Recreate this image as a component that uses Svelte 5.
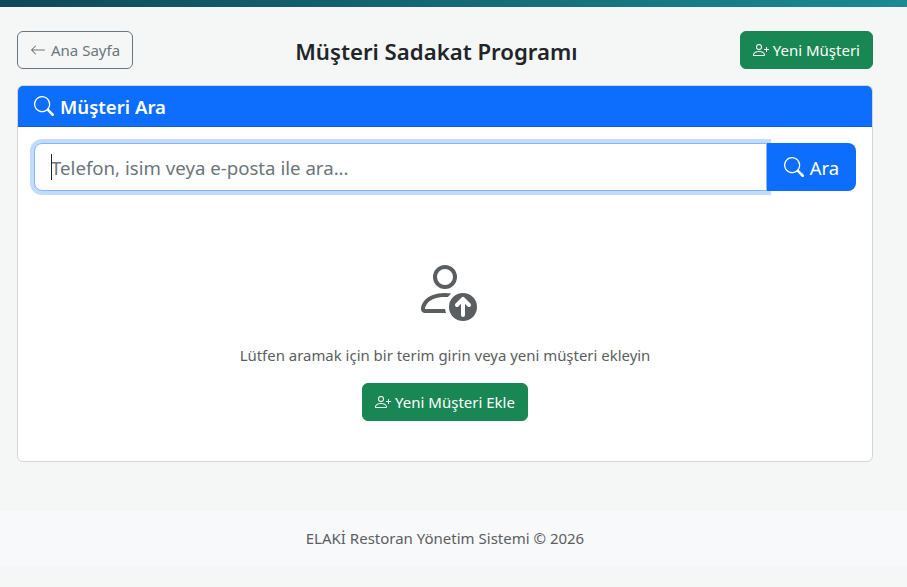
<script>
  const search = "M11.742 10.344a6.5 6.5 0 1 0-1.397 1.398h-.001q.044.06.098.115l3.85 3.85a1 1 0 0 0 1.415-1.414l-3.85-3.85a1 1 0 0 0-.115-.099zM12 6.5a5.5 5.5 0 1 1-11 0 5.5 5.5 0 0 1 11 0";
  const plus = ["M6 8a3 3 0 1 0 0-6 3 3 0 0 0 0 6m2-3a2 2 0 1 1-4 0 2 2 0 0 1 4 0m4 8c0 1-1 1-1 1H1s-1 0-1-1 1-4 6-4 6 3 6 4m-1-.004c-.001-.246-.154-.986-.832-1.664C9.516 10.68 8.289 10 6 10s-3.516.68-4.168 1.332c-.678.678-.83 1.418-.832 1.664z", "M13.5 5a.5.5 0 0 1 .5.5V7h1.5a.5.5 0 0 1 0 1H14v1.5a.5.5 0 0 1-1 0V8h-1.5a.5.5 0 0 1 0-1H13V5.5a.5.5 0 0 1 .5-.5"];
</script>

<div class="topbar"></div>
<main class="page">
  <header class="head">
    <button class="btn outline">
      <svg class="ico" viewBox="0 0 16 16"><path d="M15 8a.5.5 0 0 0-.5-.5H2.707l3.147-3.146a.5.5 0 1 0-.708-.708l-4 4a.5.5 0 0 0 0 .708l4 4a.5.5 0 0 0 .708-.708L2.707 8.5H14.5A.5.5 0 0 0 15 8"/></svg>
      Ana Sayfa
    </button>
    <h1>Müşteri Sadakat Programı</h1>
    <button class="btn green">
      <svg class="ico" viewBox="0 0 16 16">{#each plus as d}<path {d}/>{/each}</svg>
      Yeni Müşteri
    </button>
  </header>

  <section class="card">
    <div class="card-head">
      <svg class="ico" viewBox="0 0 16 16"><path d={search}/></svg>
      <h2>Müşteri Ara</h2>
    </div>
    <div class="card-body">
      <div class="group">
        <div class="field">
          <input type="text" placeholder="Telefon, isim veya e-posta ile ara..." />
          <span class="caret"></span>
        </div>
        <button class="go">
          <svg class="ico" viewBox="0 0 16 16"><path d={search}/></svg>
          Ara
        </button>
      </div>
      <div class="empty">
        <svg class="big" viewBox="0 0 16 16">
          <path d="M12.5 16a3.5 3.5 0 1 0 0-7 3.5 3.5 0 0 0 0 7m.354-5.854 1.5 1.5a.5.5 0 0 1-.708.708L13 11.707V14.5a.5.5 0 0 1-1 0v-2.793l-.646.647a.5.5 0 0 1-.708-.708l1.5-1.5a.5.5 0 0 1 .708 0M11 5a3 3 0 1 1-6 0 3 3 0 0 1 6 0M8 7a2 2 0 1 0 0-4 2 2 0 0 0 0 4"/>
          <path d="M8.256 14a4.5 4.5 0 0 1-.229-1.004H3c.001-.246.154-.986.832-1.664C4.484 10.68 5.711 10 8 10q.39 0 .74.025c.226-.341.496-.65.804-.918Q8.844 9.002 8 9c-5 0-6 3-6 4s1 1 1 1z"/>
        </svg>
        <p>Lütfen aramak için bir terim girin veya yeni müşteri ekleyin</p>
        <button class="btn green">
          <svg class="ico" viewBox="0 0 16 16">{#each plus as d}<path {d}/>{/each}</svg>
          Yeni Müşteri Ekle
        </button>
      </div>
    </div>
  </section>
</main>
<footer class="foot">ELAKİ Restoran Yönetim Sistemi © 2026</footer>

<style>
  :global(body) {
    margin: 0;
    background: #f5f7f6;
    font-family: "Noto Sans", "Open Sans", sans-serif;
    color: #212529;
  }
  .topbar {
    height: 7px;
    background: linear-gradient(90deg, #0f4858, #1b8a92);
  }
  .page {
    width: 856px;
    margin-left: 17px;
    padding-top: 24px;
  }
  .head {
    display: flex;
    align-items: center;
    justify-content: space-between;
    height: 38px;
    margin-bottom: 16px;
  }
  h1 {
    margin: 4px 0 0;
    font-size: 22.2px;
    font-weight: 600;
    line-height: 1.2;
    color: #212529;
  }
  .btn {
    display: inline-flex;
    align-items: center;
    justify-content: center;
    gap: 4px;
    height: 38px;
    padding: 0 12px;
    border: 1px solid;
    border-radius: 6px;
    font: 400 15px "Noto Sans", sans-serif;
    white-space: nowrap;
  }
  .outline {
    gap: 5px;
    background: transparent;
    border-color: #6c757d;
    color: #6c757d;
  }
  .green {
    background: #198754;
    border-color: #198754;
    color: #fff;
  }
  .ico {
    width: 16px;
    height: 16px;
    fill: currentColor;
    flex: none;
  }
  .card {
    height: 377px;
    box-sizing: border-box;
    background: #fff;
    border: 1px solid #d3d5d6;
    border-radius: 6px;
    overflow: hidden;
  }
  .card-head {
    display: flex;
    align-items: center;
    gap: 6px;
    height: 41px;
    padding: 0 16px;
    box-sizing: border-box;
    background: #0d6efd;
    color: #fff;
    border-bottom: 1px solid #0b5ed7;
  }
  .card-head .ico {
    width: 20px;
    height: 20px;
  }
  h2 {
    margin: 2px 0 0;
    font-size: 18.6px;
    font-weight: 600;
    line-height: 1.2;
  }
  .card-body {
    padding: 16px;
  }
  .group {
    display: flex;
    height: 48px;
  }
  .field {
    position: relative;
    flex: 1;
    display: flex;
  }
  input {
    flex: 1;
    min-width: 0;
    box-sizing: border-box;
    padding: 0 16px;
    background: #fff;
    border: 1px solid #86b7fe;
    border-radius: 8px 0 0 8px;
    box-shadow: 0 0 0 4px rgba(13, 110, 253, 0.25);
    font: 400 18.65px "Noto Sans", sans-serif;
    color: #212529;
    outline: none;
  }
  input::placeholder {
    color: #6c757d;
    opacity: 1;
  }
  .caret {
    position: absolute;
    left: 17px;
    top: 11px;
    width: 1px;
    height: 26px;
    background: #212529;
  }
  .go {
    position: relative;
    display: inline-flex;
    align-items: center;
    justify-content: center;
    gap: 6px;
    width: 89px;
    flex: none;
    background: #0d6efd;
    border: 0;
    border-radius: 0 8px 8px 0;
    color: #fff;
    font: 400 18.4px "Noto Sans", sans-serif;
  }
  .go .ico {
    width: 20px;
    height: 20px;
  }
  .empty {
    display: flex;
    flex-direction: column;
    align-items: center;
    padding-top: 66px;
  }
  .big {
    width: 64px;
    height: 64px;
    fill: #5b5e61;
  }
  p {
    margin: 23px 0 17px;
    font-size: 14.95px;
    line-height: 22px;
    color: #5b5e61;
  }
  .foot {
    margin-top: 49px;
    height: 55px;
    box-sizing: border-box;
    padding: 0 17px 2px 0;
    display: flex;
    align-items: center;
    justify-content: center;
    background: #f8f9fa;
    font-size: 15px;
    color: #5b5e61;
  }
</style>
